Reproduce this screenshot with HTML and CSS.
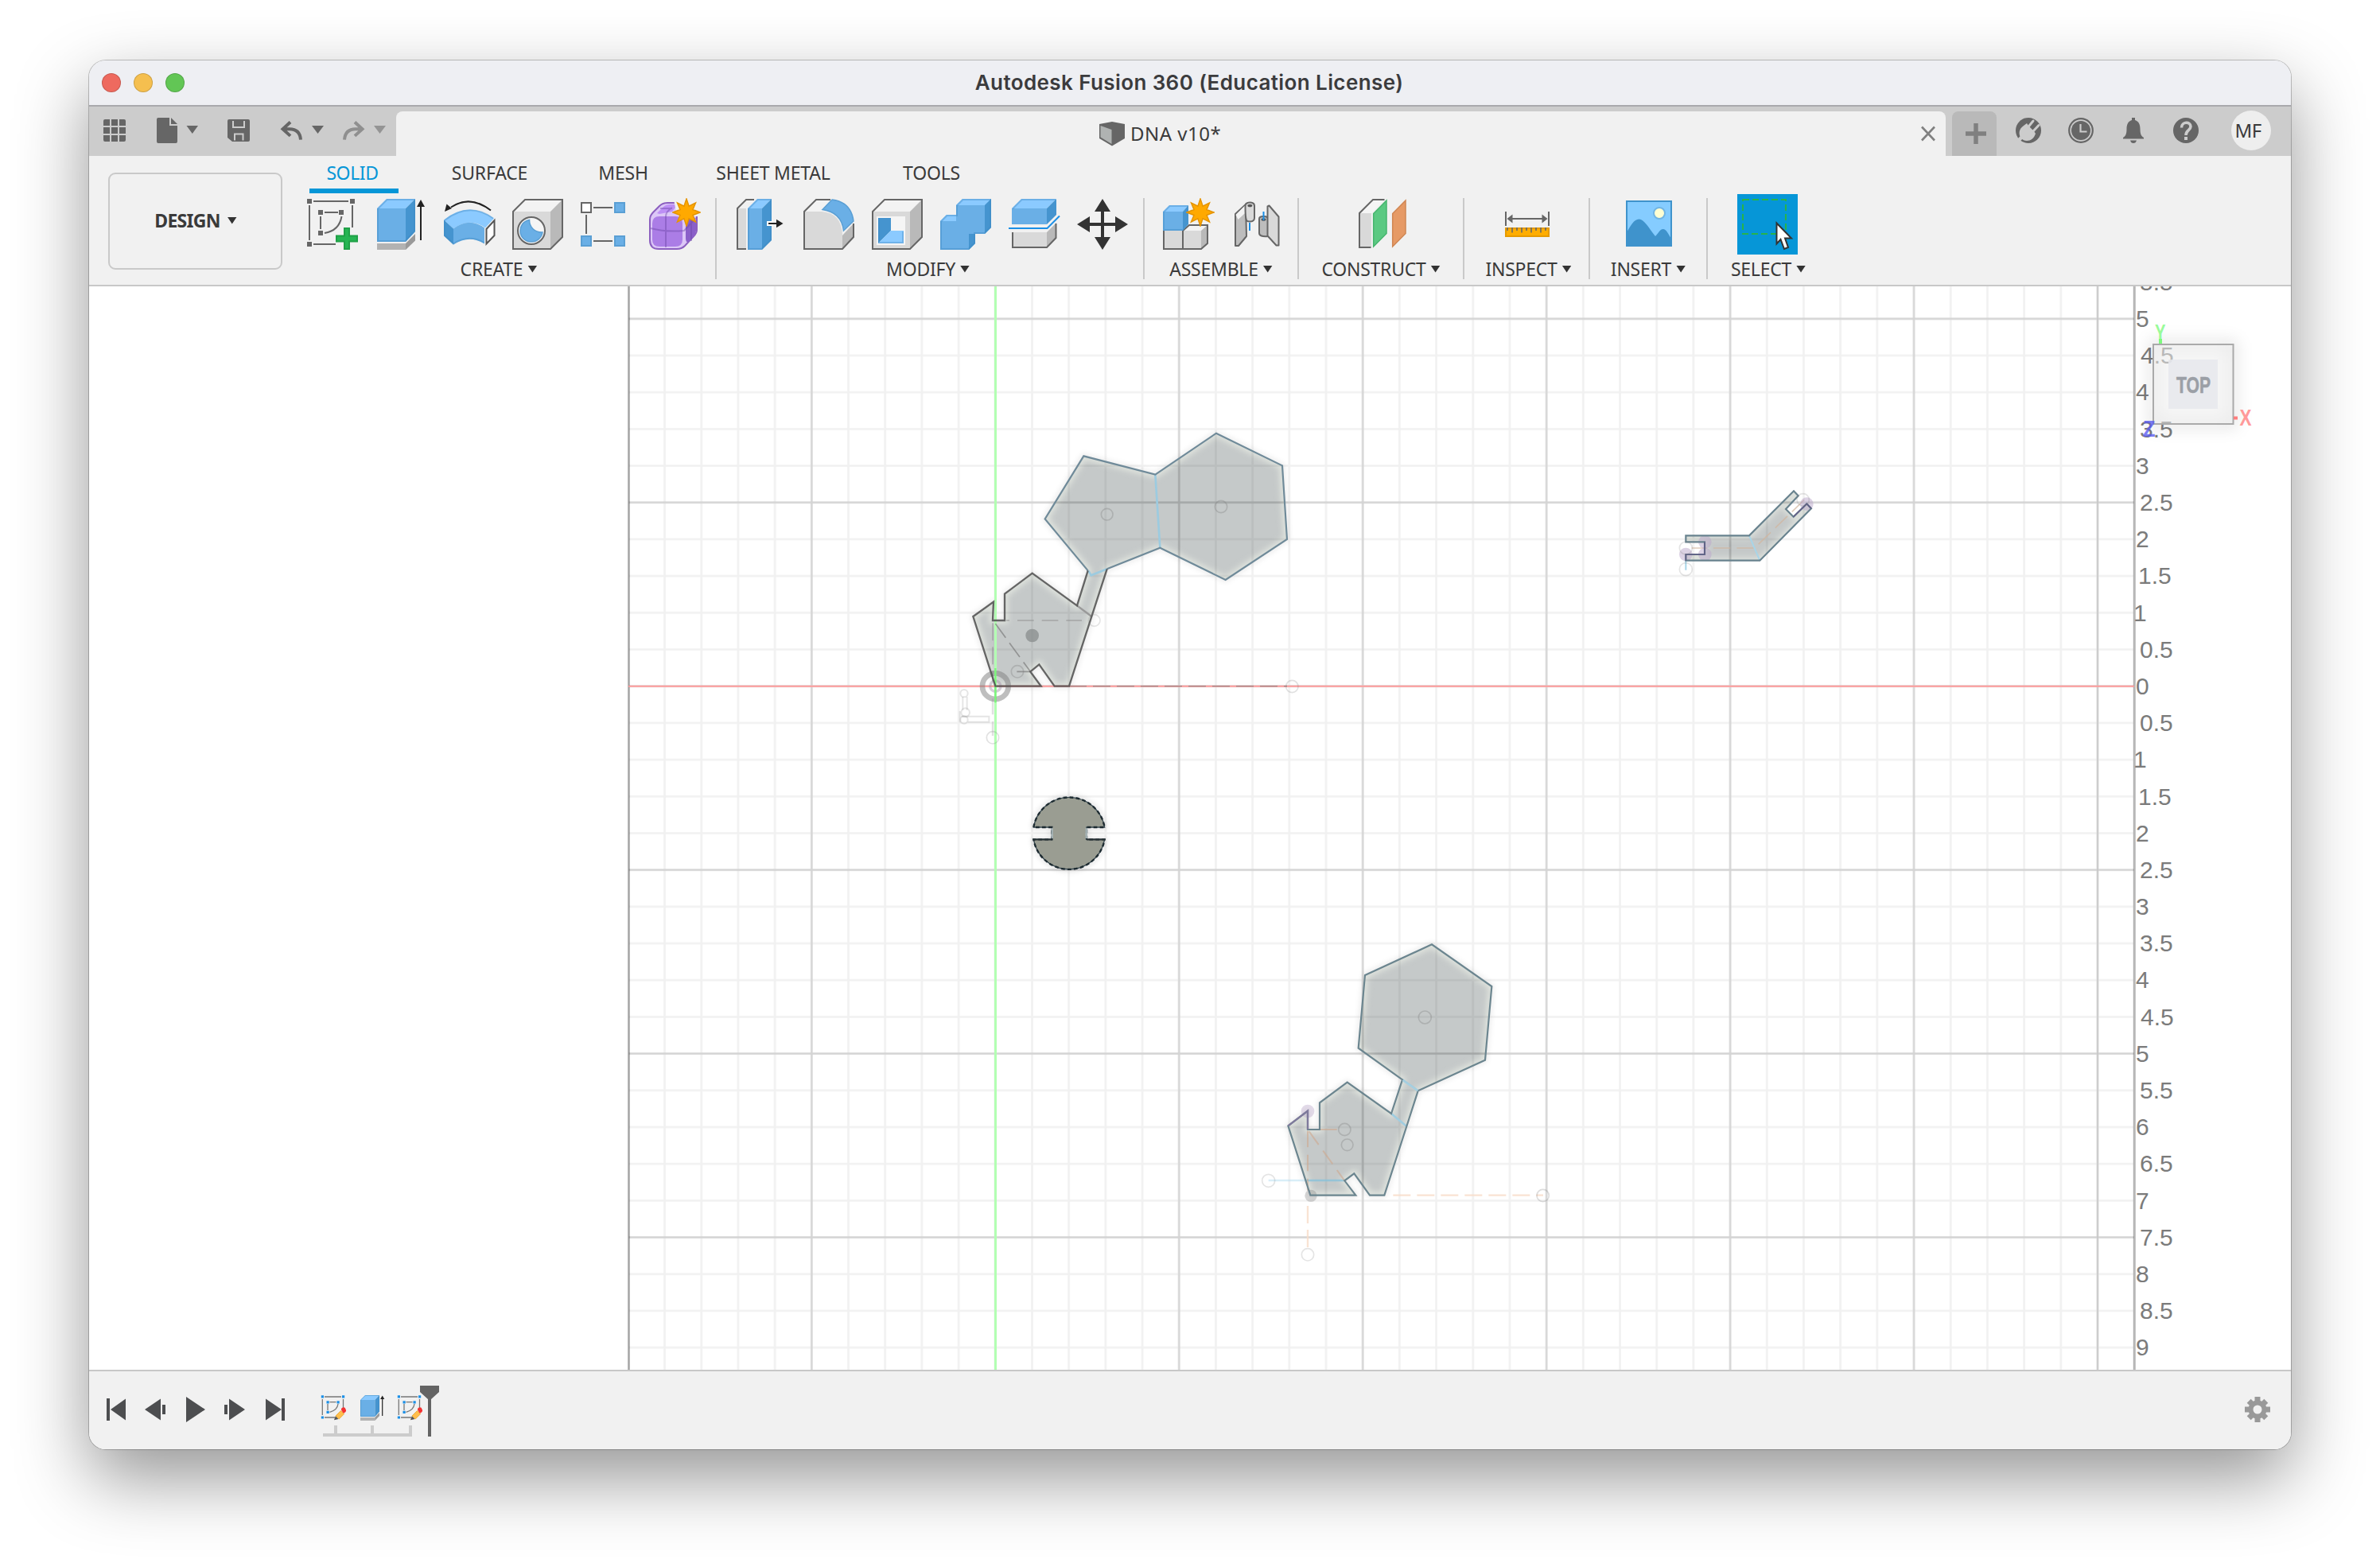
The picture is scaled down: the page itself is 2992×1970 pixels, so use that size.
FILE: index.html
```html
<!DOCTYPE html>
<html lang="en">
<head>
<meta charset="utf-8">
<title>Autodesk Fusion 360 (Education License)</title>
<link rel="stylesheet" href="styles.css">
</head>
<body>
<svg class="defs" width="0" height="0" aria-hidden="true">
  <defs>
    <symbol id="star" viewBox="-18 -18 36 36">
      <path d="M0-17 3.1-7.8 11.5-12 8-3.5 17 0 8 3.5 11.5 12 3.1 7.8 0 17-3.1 7.8-11.5 12-8 3.5-17 0-8-3.5-11.5-12-3.1-7.8Z" fill="#ffa900" stroke="#e59400" stroke-width="1.5"/>
    </symbol>
    <symbol id="history-sketch" viewBox="400 1752 40 36">
      <path d="M408 1756h21M408 1782h13M405.3 1759v20M431.5 1759v11M414.500 1762.700h8M412 1765v8M425 1765q-1 8-10.500 10.300" fill="none" stroke="#777" stroke-width="1.3"/>
      <path d="M403.800 1754.300h3.200v3.200h-3.200zM430 1754.300h3.200v3.200h-3.200zM403.800 1780.400h3.200v3.200h-3.200zM410.500 1761.200h3.200v3.200h-3.200zM423.500 1761.200h3.200v3.200h-3.200zM410.500 1773.800h3.200v3.200h-3.200z" fill="#1b8fe6"/>
      <path d="M420 1785.300l1.800-5 3.800 3.800z" fill="#555"/>
      <path d="M422 1780l6.500-6.500 4.200 4-6.500 6.500z" fill="#ffbe4d" stroke="#e8a32a" stroke-width=".8"/>
      <path d="M429 1772.500a2.800 2.800 0 0 1 5.500-1q1.500 2.500-.8 4.300l-2 1z" fill="#f43232"/>
    </symbol>
  </defs>
</svg>

<main class="window">
  <header class="titlebar">
    <div class="lights"><i class="light close"></i><i class="light minimize"></i><i class="light zoom"></i></div>
    <h1 class="title">Autodesk Fusion 360 (Education License)</h1>
  </header>

  <nav class="docbar">
    <div class="quick">
      <svg width="32" height="36" viewBox="128 146 32 36" fill="#666"><path d="M132 150h6v8h-8v-6a2 2 0 0 1 2-2zM140 150h8v8h-8zM150 150h6a2 2 0 0 1 2 2v6h-8zM130 160h8v8h-8zM140 160h8v8h-8zM150 160h8v8h-8zM130 170h8v8h-6a2 2 0 0 1-2-2zM140 170h8v8h-8zM150 170h8v6a2 2 0 0 1-2 2h-6z"/></svg>
      <svg class="file" width="60" height="36" viewBox="192 146 60 36" fill="#666"><path d="M199 148h14v10h10v20a2 2 0 0 1-2 2h-22a2 2 0 0 1-2-2v-28a2 2 0 0 1 2-2zM215 148l8 8h-8zM234.500 158h14.500l-7.200 10z"/></svg>
      <svg class="save" width="32" height="36" viewBox="284 146 32 36"><path d="M288 150h24a2 2 0 0 1 2 2v24a2 2 0 0 1-2 2h-20l-6-5v-21a2 2 0 0 1 2-2z" fill="#666"/><path d="M293 152v8h14v-8M295 176.500v-8h10.500v8" fill="none" stroke="#ccc" stroke-width="2"/></svg>
      <svg class="undo" width="60" height="36" viewBox="350 146 60 36"><path d="M365 153.500l-9.500 8.700 9.500 8.700M356 162.200h8q13 0 14 13.500" fill="none" stroke="#666" stroke-width="4"/><path d="M392 158h15l-7.500 10z" fill="#666"/></svg>
      <svg class="redo" width="60" height="36" viewBox="428 146 60 36"><path d="M446 153.500l9.500 8.700-9.500 8.700M455 162.200h-8q-13 0-14 13.500" fill="none" stroke="#8f8f8f" stroke-width="4"/><path d="M470 158h15l-7.500 10z" fill="#949494"/></svg>
    </div>
    <div class="doctab">
      <svg width="34" height="34" viewBox="1381 151 34 34"><path d="M1382 156l16-3 16 3v18l-16 9.500-16-9.500z" fill="#666"/><path d="M1383.500 158l14 5v18l-14-8.500z" fill="#b0b3b2"/></svg>
      <span class="docname">DNA v10*</span>
      <svg class="x" width="18" height="20" viewBox="0 0 18 20"><path d="M1 1.500l16 17M17 1.500l-16 17" stroke="#808080" stroke-width="2.600"/></svg>
    </div>
    <div class="newtab"><svg width="26" height="26" viewBox="0 0 26 26"><path d="M13 0v26M0 13h26" stroke="#808080" stroke-width="5.500"/></svg></div>
    <div class="account">
      <svg width="36" height="36" viewBox="2532 146 36 36"><circle cx="2550" cy="164" r="16" fill="#666"/><path d="M2535 179l7-7" stroke="#ccc" stroke-width="4.500"/><path d="M2541 174c-4-5-3-12 3-16l4-3 2 3 7 7 2 3c-2 6-6 9-11 9-3 0-5-1-7-3z" fill="#ccc"/><path d="M2549.500 160l6.500-8M2555.500 165.500l7.500-8" stroke="#ccc" stroke-width="3" stroke-linecap="round"/></svg>
      <svg width="36" height="36" viewBox="2598 146 36 36"><circle cx="2616" cy="164" r="14.800" fill="none" stroke="#666" stroke-width="2.200"/><circle cx="2616" cy="164" r="12" fill="#666"/><path d="M2615.500 156v9.500h8" fill="none" stroke="#ccc" stroke-width="2.200"/></svg>
      <svg width="36" height="36" viewBox="2664 146 36 36" fill="#666"><path d="M2680 148h4v3c5 1.500 6.500 6 6.500 11 0 6 1 9 4.500 11v1.500h-26v-1.500c3.500-2 4.500-5 4.500-11 0-5 1.500-9.500 6.500-11zM2678 176.500h8q-1 3.500-4 3.500t-4-3.500z"/></svg>
      <svg width="36" height="36" viewBox="2730 146 36 36"><circle cx="2748" cy="164" r="16" fill="#666"/><path d="M2742.500 160.500c0-8 11.500-8 11.500-1.500 0 5-6 4.500-6 11" fill="none" stroke="#ccc" stroke-width="3.600"/><path d="M2746 172h4v4h-4z" fill="#ccc"/></svg>
      <span class="avatar">MF</span>
    </div>
  </nav>

  <section class="ribbon">
    <button class="workspace">DESIGN<i class="caret"></i></button>
    <div class="tools">
      <div class="tabs"><span class="tab active">SOLID</span><span class="tab surface">SURFACE</span><span class="tab mesh">MESH</span><span class="tab sheet">SHEET METAL</span><span class="tab utilities">TOOLS</span></div>
      <div class="groups">
        <div class="group create">
          <div class="icons">
            <svg viewBox="382 246 72 76"><path d="M394 253h44M389 258v44M443 258v28M394 307h28M408 267h17M403 272v16M429.500 272q-3 18-21.500 21" fill="none" stroke="#666" stroke-width="2"/><path d="M386 250h6v6h-6zM440 250h6v6h-6zM386 304h6v6h-6zM400 264h6v6h-6zM426 264h6v6h-6zM400 290h6v6h-6z" fill="#666"/><path d="M433 287h6v9.500h10v7h-10v9.500h-6v-9.500h-10v-7h10z" fill="#26b553" stroke="#1fa047" stroke-width="2"/></svg>
            <svg viewBox="468 246 72 76"><path d="M474 306h36v8h-36z" fill="#b2b2b2"/><path d="M510 306l12-12v8.500l-12 11.500z" fill="#999"/><path d="M474 262l12-12h36l-12 12z" fill="#8bcaff"/><path d="M510 262l12-12v41l-12 13z" fill="#4594cf"/><path d="M474 262h36v42h-36z" fill="#6aafe6"/><path d="M475 262.500l11.500-11.500h34.500v40l-11.500 12h-34.500z" fill="none" stroke="#3b87c0" stroke-opacity=".4" stroke-width="2"/><path d="M529 258v44" stroke="#222" stroke-width="2"/><path d="M529 251l5 9h-10z" fill="#222"/></svg>
            <svg viewBox="554 246 72 76"><path d="M617 264.500q-26-20-50-4" fill="none" stroke="#222" stroke-width="2"/><path d="M559 266l2.500-9.500 6.500 5.500z" fill="#222"/><path d="M558 276.500q31-25 63 -2l-11 12q-19-14-40 1z" fill="#8bcaff"/><path d="M558 276.500l12 11v20l-12-11z" fill="#4594cf"/><path d="M570 287.500q20-15 39-1v20q-19-12-39 1z" fill="#6aafe6"/><path d="M559 277q31-24 61-2.500M559 277v19l11 10.500q19-12.500 38.500-1.500" fill="none" stroke="#3b87c0" stroke-opacity=".4" stroke-width="2"/><path d="M611.500 288l10-11v19l-10 10.500z" fill="#fff" stroke="#555" stroke-width="2"/></svg>
            <svg viewBox="640 246 72 76"><path d="M645 266l15-15h47l-15 15z" fill="#f3f3f3"/><path d="M692 266l15-15v47l-15 15z" fill="#b9b9b9"/><path d="M645 266h47v47h-47z" fill="#d9d9d9"/><path d="M645 266l15-15h47v47l-15 15h-47z" fill="none" stroke="#666" stroke-width="2"/><circle cx="668" cy="290" r="17" fill="#f5f5f5" stroke="#666" stroke-width="2"/><path d="M665.500 276.500c-8 1.500-11.500 8-11.500 13.500 0 8 6 14 14 14 7 0 13-5 14-12-10 .500-16.500-6.500-16.500-15.500z" fill="#6aafe6" stroke="#5a9fd4" stroke-width="1.500"/></svg>
            <svg viewBox="726 246 72 76"><path d="M746 261h24M737 270v24M746 303h24" stroke="#666" stroke-width="2"/><path d="M731 255h12v12h-12z" fill="#fff" stroke="#666" stroke-width="2"/><path d="M773 255h12v12h-12zM731 297h12v12h-12zM773 297h12v12h-12z" fill="#6aafe6" stroke="#5a9fd4" stroke-width="2"/></svg>
            <svg viewBox="812 246 72 76"><path d="M817 276q0-5 4-9l8-8q4-4 10-4h30q7 0 7 7v27q0 4-4 8l-11 12q-4 4-10 4h-23q-11 0-11-11z" fill="#dcc7f7" stroke="#8c5fc0" stroke-width="2"/><path d="M826 268l8-8q3-3 8-3h10l-7 9-16 3z" fill="#bd8ff5"/><path d="M820 281q0-9 9-9h20q9 0 9 9v20q0 9-9 9h-20q-9 0-9-9z" fill="#ab7de6"/><path d="M862 284q0-5 4-9 6-5 9 3v12q-1 6-5 10-8 9-8-1z" fill="#8a5fc9"/><path d="M837 311v-39q0-6 8-11M818 287q19 5 42 3l15-16M830 262h15M869 277v26" fill="none" stroke="#6d47a8" stroke-opacity=".45" stroke-width="2"/><path d="M846 246h36v26h-12q-16 6-20-6z" fill="#f1f1f1"/><use href="#star" x="845" y="249" width="36" height="36"/></svg>
          </div>
          <div class="label">CREATE<i class="caret"></i></div>
        </div>
        <span class="divider"></span>
        <div class="group modify">
          <div class="icons">
            <svg viewBox="922 246 72 76"><path d="M927 262h11v51h-11z" fill="#d9d9d9"/><path d="M938 313h-11v-51l11-11h10" fill="none" stroke="#666" stroke-width="2"/><path d="M940 262l12-12h18l-12 12z" fill="#8bcaff"/><path d="M958 262l12-12v52l-12 12z" fill="#4594cf"/><path d="M940 262h18v52h-18z" fill="#6aafe6"/><path d="M941 262.500l11.500-11.500h16.500v50.500l-11.500 11.500h-16.500z" fill="none" stroke="#3b87c0" stroke-opacity=".4" stroke-width="2"/><path d="M964 278h8v6h-8z" fill="#fff"/><path d="M966 281h12" stroke="#222" stroke-width="2"/><path d="M984.500 281l-8.500 5.200v-10.400z" fill="#222"/></svg>
            <svg viewBox="1008 246 72 76"><path d="M1011 266l15-15h18l-11 15z" fill="#f3f3f3"/><path d="M1059 296l14-15v17l-14 15z" fill="#b9b9b9"/><path d="M1011 266h22q25 2 26 29v18h-48z" fill="#d9d9d9"/><path d="M1044 251h-18l-15 15v47h48l14-15v-17" fill="none" stroke="#666" stroke-width="2"/><path d="M1034 263.500l12-12.500q24 3 27 27l-12.500 12q-2.500-23-26.500-26.500z" fill="#6aafe6" stroke="#5a9fd4" stroke-width="1.500"/></svg>
            <svg viewBox="1094 246 72 76"><path d="M1097 266l15-15h47l-15 15z" fill="#f3f3f3"/><path d="M1144 266l15-15v47l-15 15z" fill="#b9b9b9"/><path d="M1097 266h47v47h-47z" fill="#d9d9d9"/><path d="M1097 266l15-15h47v47l-15 15h-47z" fill="none" stroke="#666" stroke-width="2"/><path d="M1102 272h36v36h-36z" fill="#f5f5f5"/><path d="M1104 274h16v16l-16 16z" fill="#4594cf"/><path d="M1104 306l16-16h16v16z" fill="#8bcaff"/><path d="M1105 275v30h30v-14" fill="none" stroke="#3b87c0" stroke-opacity=".35" stroke-width="2"/></svg>
            <svg viewBox="1180 246 72 76"><path d="M1182 278l8-8h12v-12l8-8h36v36l-8 8h-12v12l-8 8h-36z" fill="#6aafe6"/><path d="M1202 258l8-8h36l-8 8zM1182 278l8-8h12v8z" fill="#8bcaff"/><path d="M1238 258l8-8v36l-8 8zM1218 294h8v12l-8 8z" fill="#4594cf"/><path d="M1202 258h36v36h-36z" fill="#6aafe6"/><path d="M1183 278.500l7.500-7.500h12.500v-12.500l7.500-7.500h34.500v34.500l-7.500 7.500h-12.500v12.500l-7.500 7.500h-34.500z" fill="none" stroke="#3b87c0" stroke-opacity=".4" stroke-width="2"/></svg>
            <svg viewBox="1266 246 72 76"><path d="M1272 262l12-12h44l-12 12z" fill="#8bcaff"/><path d="M1316 262l12-12v20l-12 12z" fill="#4594cf"/><path d="M1272 262h44v20h-44z" fill="#6aafe6"/><path d="M1273 262.500l11.500-11.500h42.500" fill="none" stroke="#3b87c0" stroke-opacity=".4" stroke-width="2"/><path d="M1268 287h48.500l15.500-15.500" fill="none" stroke="#1b8fe6" stroke-width="2"/><path d="M1273 292h43v19h-43z" fill="#d9d9d9"/><path d="M1316 292l12-12v19l-12 12z" fill="#b9b9b9"/><path d="M1273 292v19h43l11.500-12v-18" fill="none" stroke="#666" stroke-width="2"/></svg>
            <svg viewBox="1352 246 72 76"><path d="M1386 262v40M1366 282h40" stroke="#333" stroke-width="4"/><path d="M1386 250l10 16h-20zM1386 314l10-16h-20zM1354 282l16-10v20zM1418 282l-16-10v20z" fill="#333"/></svg>
          </div>
          <div class="label">MODIFY<i class="caret"></i></div>
        </div>
        <span class="divider"></span>
        <div class="group assemble">
          <div class="icons">
            <svg viewBox="1460 246 72 76"><path d="M1463 290h24v23h-24zM1487 290h23v23h-23z" fill="#d9d9d9"/><path d="M1487 290l8-7h23l-8 7z" fill="#f3f3f3"/><path d="M1510 290l8-7v23l-8 7z" fill="#b9b9b9"/><path d="M1463 290v23h47l8-7v-23h-23l-8 7v23" fill="none" stroke="#666" stroke-width="2"/><path d="M1462 266l8-8h24l-7 8z" fill="#8bcaff"/><path d="M1487 266l7-8v24l-7 8z" fill="#4594cf"/><path d="M1462 266h25v24h-25z" fill="#6aafe6"/><path d="M1463 266.500l7.500-7.500h23M1463 266v23h24" fill="none" stroke="#3b87c0" stroke-opacity=".4" stroke-width="2"/><circle cx="1509" cy="267" r="14" fill="#f1f1f1"/><use href="#star" x="1491" y="249" width="36" height="36"/></svg>
            <svg viewBox="1546 246 72 76" stroke-linejoin="round"><path d="M1553 269l13-12 1 40-10 12h-4z" fill="#bdbdbd" stroke="#666" stroke-width="2"/><path d="M1553.500 270l12-12 5 5-14 13z" fill="#f3f3f3"/><path d="M1565.500 259q0-4.500 6-4.500 5.500 0 5.500 4.500v15q0 4-5 4.500-4 .500-5-1.500-1.500-3-1.500-18z" fill="#d9d9d9" stroke="#666" stroke-width="2"/><ellipse cx="1571.300" cy="258.500" rx="3" ry="1.800" fill="#555"/><path d="M1571 280v10" stroke="#1b8fe6" stroke-width="2"/><path d="M1583 275q0-3 5.500-3t5.500 3v22q-11 1-11-4z" fill="#bdbdbd" stroke="#666" stroke-width="2"/><path d="M1593.500 259.500l2-1 12 14v36h-3l-11-12z" fill="#d9d9d9" stroke="#666" stroke-width="2"/><ellipse cx="1588.500" cy="276" rx="3" ry="1.800" fill="#555"/><path d="M1588.500 266v11" stroke="#1b8fe6" stroke-width="2"/></svg>
          </div>
          <div class="label">ASSEMBLE<i class="caret"></i></div>
        </div>
        <span class="divider"></span>
        <div class="group construct">
          <div class="icons">
            <svg viewBox="1702 246 72 76"><path d="M1709 268h15v43h-15z" fill="#d9d9d9"/><path d="M1709 268l17-17h14l-16 17z" fill="#f5f5f5"/><path d="M1723.500 311h-14.500v-43l17-17h14.500" fill="none" stroke="#666" stroke-width="2"/><path d="M1726.700 268.500l16.300-16.500v41.500l-16.300 16.500z" fill="#5bc982" stroke="#46b56e" stroke-width="1.500"/><path d="M1750.700 268.500l16.300-16.500v41.500l-16.300 16.500z" fill="#e69a66" stroke="#d08653" stroke-width="1.500"/></svg>
          </div>
          <div class="label">CONSTRUCT<i class="caret"></i></div>
        </div>
        <span class="divider"></span>
        <div class="group inspect">
          <div class="icons">
            <svg viewBox="1884 246 72 76"><path d="M1893 266v18M1947 266v18M1898 275h44" stroke="#666" stroke-width="2"/><path d="M1894.500 275l7-5.500v11zM1945.500 275l-7-5.500v11z" fill="#666"/><path d="M1893 287h54v10h-54z" fill="#ffad00" stroke="#e59a00" stroke-width="2"/><path d="M1895 286v4M1901 286v6.500M1907 286v4M1913 286v6.500M1919 286v4M1925 286v6.500M1931 286v4M1937 286v6.500M1943 286v4" stroke="#666" stroke-width="1.600"/></svg>
          </div>
          <div class="label">INSPECT<i class="caret"></i></div>
        </div>
        <span class="divider"></span>
        <div class="group insert">
          <div class="icons">
            <svg viewBox="2037 246 72 76"><path d="M2045 253h56v56h-56z" fill="#85ccff" stroke="#3f93cc" stroke-width="2"/><circle cx="2086" cy="268" r="7" fill="#ffffd2" stroke="#71b5e4" stroke-width="2"/><path d="M2045 292c5-8 9-16.500 15.500-16.500S2073 287 2081 297c4-4 6-9 9.700-9 4 0 6 5 10.300 12v9h-56z" fill="#3f93cc"/></svg>
          </div>
          <div class="label">INSERT<i class="caret"></i></div>
        </div>
        <span class="divider"></span>
        <div class="group select">
          <div class="icons">
            <svg class="picked" viewBox="2184 244 76 76"><path d="M2191 251h54v43h-54z" fill="none" stroke="#27b34a" stroke-width="2" stroke-dasharray="8 4"/><path d="M2233.500 280.500v26l5-5.500 4.500 12 5-2-4-11.500h8z" fill="#fff" stroke="#333" stroke-width="2"/></svg>
          </div>
          <div class="label">SELECT<i class="caret"></i></div>
        </div>
      </div>
    </div>
  </section>

  <section class="viewport">
    <svg class="scene" viewBox="112 360 2768 1362" width="2768" height="1362">
      <defs>
        <pattern id="minor" patternUnits="userSpaceOnUse" x="1228.200" y="839.600" width="46.190" height="46.190">
          <path d="M23.100 0v46.190M0 23.100h46.190" stroke="#000" stroke-opacity=".055" stroke-width="2.600"/>
        </pattern>
        <pattern id="major" patternUnits="userSpaceOnUse" x="1135.800" y="747.200" width="230.950" height="230.950">
          <path d="M115.500 0v230.950M0 115.500h230.950" stroke="#000" stroke-opacity=".12" stroke-width="2.400"/>
        </pattern>
        <filter id="soft" x="-20%" y="-20%" width="140%" height="140%"><feGaussianBlur stdDeviation="11"/></filter>
        <path id="purine" d="M184 1028 100 765 177 710 174 780H219V680L323 602 492 724 533 592 371 397 517 160 787 230 1017 74 1266 196 1284 474 1052 627 805 506 605 586 547 765 462 1028H407L349 946 316 973 356 1028Z"/>
        <path id="pyrimidine" d="M262 1028 178 766 252 710V780H297V679L401 602 567 720 609 592 443 473 468 198 720 82 946 240 921 518 668 634 625 768 541 1028H486L427 946 391 973 433 1028Z"/>
        <path id="link" d="M118 250H357L525 82 542 100 495 150 524 179 574 130 591 148 397 344H118V321H189V274H118Z"/>
        <path id="disc" d="M118 210A136 136 0 0 1 386 210H318V256H386A136 136 0 0 1 118 256H187V210Z"/>
        <clipPath id="clip-a"><use href="#purine"/></clipPath>
        <clipPath id="clip-b"><use href="#pyrimidine"/></clipPath>
        <clipPath id="clip-c"><use href="#link"/></clipPath>
      </defs>

      <!-- body fills, under the grid -->
      <g transform="translate(1190 520) scale(.33333)">
        <use href="#purine" fill="none" stroke="#000" stroke-opacity=".18" stroke-width="8" filter="url(#soft)"/>
        <use href="#purine" fill="#c5c9c9"/>
        <g clip-path="url(#clip-a)"><use href="#purine" fill="none" stroke="#e0e4de" stroke-width="26" filter="url(#soft)"/></g>
      </g>
      <g transform="translate(1560 1160) scale(.33333)">
        <use href="#pyrimidine" fill="none" stroke="#000" stroke-opacity=".18" stroke-width="8" filter="url(#soft)"/>
        <use href="#pyrimidine" fill="#c5c9c9"/>
        <g clip-path="url(#clip-b)"><use href="#pyrimidine" fill="none" stroke="#e0e4de" stroke-width="26" filter="url(#soft)"/></g>
      </g>
      <g transform="translate(2080 590) scale(.33333)">
        <use href="#link" fill="#c5c9c9"/>
        <g clip-path="url(#clip-c)"><use href="#link" fill="none" stroke="#e0e4de" stroke-width="20" filter="url(#soft)"/></g>
      </g>

      <!-- grid and axes -->
      <rect x="790" y="360" width="1893" height="1362" fill="url(#minor)"/>
      <rect x="790" y="360" width="1893" height="1362" fill="url(#major)"/>
      <path d="M790.500 360v1362M2683.300 360v1362" stroke="#000" stroke-opacity=".27" stroke-width="3"/>
      <path d="M2637 360v1362" stroke="#000" stroke-opacity=".05" stroke-width="2"/>
      <path d="M790 862.700h1893" stroke="#ff9c9c" stroke-width="2"/>
      <path d="M1251.500 360v1362" stroke="#b3ffb3" stroke-width="3"/>

      <!-- outlines and sketch geometry -->
      <g transform="translate(1190 520) scale(.33333)" fill="none">
        <circle cx="184" cy="1028" r="49" stroke="#7d7d7d" stroke-opacity=".5" stroke-width="20"/>
        <circle cx="184" cy="1028" r="20" stroke="#9b8aa0" stroke-opacity=".4" stroke-width="10"/>
        <path d="M184 960V1090" stroke="#7df57d" stroke-width="7"/>
        <path d="M225 780H510" stroke="#888" stroke-opacity=".55" stroke-width="5" stroke-dasharray="62 30" stroke-dashoffset="50"/>
        <path d="M184 792 316 973M265 973H316" stroke="#777" stroke-opacity=".65" stroke-width="5" stroke-dasharray="66 24"/>
        <path d="M174 790V1010" stroke="#777" stroke-opacity=".35" stroke-width="6" stroke-dasharray="66 24"/>
        <path d="M174 1075V1215" stroke="#888" stroke-opacity=".25" stroke-width="7" stroke-dasharray="60 26"/>
        <path d="M492 724 547 765" stroke="#999" stroke-width="7"/>
        <path d="M462 1028H1284" stroke="#777" stroke-opacity=".65" stroke-width="4" stroke-dasharray="66 24"/>
        <path d="M787 230 805 506M535 592 545 610 605 586" stroke="#9ccbe0" stroke-width="8"/>
        <path d="M533 592 371 397 517 160 787 230 1017 74 1266 196 1284 474 1052 627 805 506 605 586" stroke="#6f8a99" stroke-width="6.500"/>
        <path d="M533 592 492 724 323 602 219 680V780H174L177 710 100 765 184 1028H356L316 973 349 946 407 1028H462L605 586" stroke="#4d4d4d" stroke-opacity=".85" stroke-width="7"/>
        <g stroke="#777" stroke-opacity=".3" stroke-width="5"><circle cx="605" cy="380" r="22"/><circle cx="1035" cy="351" r="23"/><circle cx="557" cy="780" r="22" stroke-opacity=".2"/><circle cx="267" cy="973" r="23"/><circle cx="1303" cy="1029" r="23" stroke-opacity=".22"/><circle cx="174" cy="1222" r="23" stroke-opacity=".22"/></g>
        <circle cx="323" cy="837" r="25" fill="#858989" fill-opacity=".7"/>
        <g stroke="#888" stroke-opacity=".22" stroke-width="6"><circle cx="66" cy="1055" r="14"/><path d="M61 1068V1118M77 1068V1118"/><circle cx="71" cy="1127" r="16"/><circle cx="66" cy="1155" r="14"/><path d="M55 1142H160V1163H80M50 1122V1165"/></g>
      </g>
      <g transform="translate(1560 1160) scale(.33333)" fill="none">
        <circle cx="252" cy="711" r="25" fill="#b9a5c9" fill-opacity=".4"/>
        <circle cx="264" cy="1030" r="23" fill="#777" fill-opacity=".3"/>
        <path d="M104 972H391" stroke="#9fd5ee" stroke-opacity=".4" stroke-width="8"/><path d="M245 972H391" stroke="#87bfd6" stroke-opacity=".7" stroke-width="7"/>
        <path d="M574 1028H1140M252 1068V1232" stroke="#f8dcc8" stroke-opacity=".8" stroke-width="7" stroke-dasharray="66 24"/>
        <path d="M252 785V1010M257 787 391 973M300 780H390" stroke="#cfa98e" stroke-opacity=".6" stroke-width="6" stroke-dasharray="62 28"/>
        <path d="M609 592 668 634M567 720 625 768" stroke="#a0cde0" stroke-width="8"/>
        <use href="#pyrimidine" stroke="#6b858f" stroke-width="6.500"/>
        <path d="M609 595 668 634" stroke="#a9d0e0" stroke-width="4"/>
        <path d="M178 766 252 710V780" stroke="#7f7a9c" stroke-width="7"/>
        <g stroke="#777" stroke-opacity=".3" stroke-width="5"><circle cx="694" cy="357" r="24"/><circle cx="391" cy="780" r="23"/><circle cx="401" cy="838" r="22"/><circle cx="104" cy="973" r="24" stroke-opacity=".2"/><circle cx="1139" cy="1029" r="23" stroke-opacity=".25"/><circle cx="252" cy="1252" r="23" stroke-opacity=".2"/></g>
      </g>
      <g transform="translate(2080 590) scale(.33333)" fill="none">
        <path d="M140 297H377L570 110" stroke="#d1b59d" stroke-opacity=".7" stroke-width="5" stroke-dasharray="64 24" stroke-dashoffset="6"/>
        <path d="M357 250 397 344M118 345V380" stroke="#a8d5e8" stroke-width="6"/>
        <g fill="#b9a5c9" fill-opacity=".5"><circle cx="118" cy="321" r="25"/><circle cx="190" cy="274" r="25"/><circle cx="190" cy="321" r="25"/><circle cx="574" cy="131" r="25"/></g>
        <use href="#link" stroke="#68828e" stroke-width="6.500"/>
        <path d="M118 344V321H189V274M524 179 574 130 591 148" stroke="#5f5483" stroke-opacity=".8" stroke-width="5"/>
        <g stroke="#777" stroke-opacity=".2" stroke-width="5"><circle cx="118" cy="297" r="24"/><circle cx="118" cy="377" r="24"/><circle cx="560" cy="115" r="23"/></g>
      </g>
      <g transform="translate(1260 970) scale(.33333)">
        <use href="#disc" fill="none" stroke="#000" stroke-opacity=".2" stroke-width="10" filter="url(#soft)"/>
        <use href="#disc" fill="#9a9d92" stroke="#33444c" stroke-width="4"/>
        <use href="#disc" fill="none" stroke="#1c2a30" stroke-width="7" stroke-dasharray="14 10"/>
        <path d="M116 256H187M318 256H388" stroke="#2a3438" stroke-width="7"/><path d="M188 214V252M317 214V252" stroke="#a9b7b9" stroke-width="7"/>
      </g>

      <!-- ruler -->
      <g class="ruler">
        <text x="2690" y="364.500">5.5</text><text x="2685" y="411">5</text><text x="2691" y="457.200">4.5</text><text x="2685" y="503.400">4</text><text x="2690" y="549.500">3.5</text><text x="2685" y="595.700">3</text><text x="2690" y="642">2.5</text><text x="2685" y="688">2</text><text x="2688" y="734.300">1.5</text><text x="2682" y="780.500">1</text><text x="2690" y="826.700">0.5</text><text x="2685" y="873">0</text>
        <text x="2690" y="919">0.5</text><text x="2682" y="965.300">1</text><text x="2688" y="1011.500">1.5</text><text x="2685" y="1057.700">2</text><text x="2690" y="1104">2.5</text><text x="2685" y="1150">3</text><text x="2690" y="1196.200">3.5</text><text x="2685" y="1242.400">4</text><text x="2691" y="1288.600">4.5</text><text x="2685" y="1334.800">5</text><text x="2690" y="1381">5.5</text><text x="2685" y="1427.200">6</text><text x="2690" y="1473.400">6.5</text><text x="2685" y="1519.600">7</text><text x="2690" y="1565.800">7.5</text><text x="2685" y="1612">8</text><text x="2690" y="1658">8.5</text><text x="2685" y="1704.300">9</text>
      </g>

      <!-- view cube -->
      <g class="viewcube">
        <rect class="cube-shadow" x="2707" y="433" width="100" height="100"/>
        <rect x="2707" y="433" width="100.500" height="100" fill="#eeeeee" fill-opacity=".55" stroke="#aaa" stroke-width="2"/>
        <rect x="2726" y="452" width="62" height="62" fill="#e6e8ec" fill-opacity=".85"/>
        <text class="face" x="2736" y="494" textLength="43" lengthAdjust="spacingAndGlyphs">TOP</text>
        <text x="2709" y="428" fill="#99fb99" textLength="13.500" lengthAdjust="spacingAndGlyphs">Y</text><path d="M2716 426v6" stroke="#7dfb7d" stroke-width="4"/>
        <text x="2815.500" y="535" fill="#ff9999" textLength="15" lengthAdjust="spacingAndGlyphs">X</text><path d="M2808 525.500h5" stroke="#ff7d7d" stroke-width="4"/>
        <text x="2694" y="549" fill="#5a5af0" fill-opacity=".8" textLength="15.500" lengthAdjust="spacingAndGlyphs">Z</text>
      </g>
    </svg>
  </section>

  <footer class="timeline">
    <svg width="240" height="40" viewBox="128 1752 240 40" fill="#4d4e50"><path d="M134 1758h4v28h-4zM158 1758.500v27l-19-13.500zM202 1758.500v27l-20-13.500zM204 1766h4v12h-4zM234 1756l24 16-24 16zM282 1766h4v12h-4zM288 1758.500l20 13.500-20 13.500zM334 1758.500l20 13.500-20 13.500zM354 1758h4v28h-4z"/></svg>
    <svg class="history" width="160" height="70" viewBox="400 1738 160 70">
      <use href="#history-sketch" x="400" y="1752" width="40" height="36"/>
      <g><path d="M453 1782h18.300v4h-18.300z" fill="#b2b2b2"/><path d="M471.300 1782l5.700-6v4l-5.700 6z" fill="#999"/><path d="M453 1760l6-6h18l-5.700 6z" fill="#8bcaff"/><path d="M471.300 1760l5.700-6v20.500l-5.700 6.500z" fill="#4594cf"/><path d="M453 1760h18.300v21h-18.300z" fill="#6aafe6"/><path d="M453.500 1760l5.700-5.500h17.300v20l-5.500 6h-17.500z" fill="none" stroke="#3b87c0" stroke-opacity=".5"/><path d="M480.700 1757v23" stroke="#222" stroke-width="1.200"/><path d="M480.700 1754.500l2.600 4.500h-5.200z" fill="#222"/></g>
      <use href="#history-sketch" x="496" y="1752" width="40" height="36"/>
      <path d="M406 1802h14v-10h4v10h42v-10h4v10h44v-10h4v14h-112z" fill="#ccc"/>
      <path d="M528 1742h24v8l-10 9v47h-4v-47l-10-9z" fill="#646464"/>
    </svg>
    <svg class="gear" width="32" height="32" viewBox="-16 -16 32 32" fill="none" stroke="#999"><path d="M0-16V-8M0 16V8M-16 0H-8M16 0H8M-10.800-10.800-7-7M10.800 10.800 7 7M-10.800 10.800-7 7M10.800-10.800 7-7" stroke-width="7"/><circle r="8.500" stroke-width="6"/></svg>
  </footer>
</main>
</body>
</html>
```
FILE: styles.css
```css
* { box-sizing: border-box; }
html { height: 100%; overflow: hidden; }
body { display: flex; min-height: 100vh; margin: 0; background: #fff; font-family: "Noto Sans", sans-serif; color: #3a3a3a; }
svg { display: block; flex: none; }
.defs { position: absolute; }

.window {
  display: flex; flex-direction: column;
  width: 2768px; height: 1746px; margin: 76px 112px 0;
  border-radius: 21px; overflow: hidden; background: #fff;
  box-shadow: 0 0 0 1px rgba(0,0,0,.22), 0 36px 90px rgba(0,0,0,.42);
}

.titlebar {
  display: grid; grid-template-columns: 1fr auto 1fr; align-items: center;
  height: 58px; background: #eeeff3; border-bottom: 2px solid #a9a9ad;
}
.lights { display: flex; gap: 16px; padding-left: 16px; }
.light { width: 24px; height: 24px; border-radius: 50%; border: 1px solid rgba(0,0,0,.16); }
.close { background: #ee6a5f; }
.minimize { background: #f5bf4f; }
.zoom { background: #62c655; }
.title { margin: 0 2px 0 0; font: 600 26px/32px Inter, sans-serif; letter-spacing: .4px; color: #3b3b3d; white-space: nowrap; }

.docbar { display: flex; height: 62px; background: #ccc; }
.quick { display: flex; width: 386px; padding: 12px 0 0 16px; }
.file, .save { margin-left: 32px; }
.undo { margin-left: 34px; }
.redo { margin-left: 18px; }
.doctab {
  display: grid; grid-template-columns: 34px auto 18px; align-items: center;
  width: 1948px; height: 56px; margin-top: 6px; padding: 0 13px 0 883px;
  background: #f1f1f1; border-radius: 8px 8px 0 0;
}
.docname { font-size: 24px; line-height: 30px; padding-left: 6px; letter-spacing: .5px; }
.newtab {
  display: flex; align-items: center; justify-content: center;
  width: 56px; height: 56px; margin: 6px 0 0 8px; background: #b9b9b9; border-radius: 8px 8px 0 0;
}
.newtab svg { margin-left: 3px; }
.account { display: flex; gap: 30px; padding: 12px 0 0 22px; }
.avatar {
  width: 50px; height: 50px; margin: -7px 0 0 9px; padding-right: 8px; border-radius: 50%;
  background: #eee; font-size: 24px; line-height: 49px; text-align: center; letter-spacing: -.5px;
}

.ribbon { display: flex; height: 164px; background: #f1f1f1; border-bottom: 2px solid #c8c8c8; }
.workspace {
  display: flex; align-items: center; justify-content: center; gap: 9px;
  width: 219px; height: 122px; margin: 21px 0 0 24px; padding: 0 0 2px 1px;
  border: 2px solid #c9c9c9; border-radius: 9px; background: none;
  font: 700 23px/30px "Noto Sans", sans-serif; color: #3a3a3a; letter-spacing: -.7px;
}
.caret { width: 12px; height: 9px; background: #333; clip-path: polygon(0 0, 100% 0, 50% 100%); }
.tools { display: flex; flex-direction: column; }
.tabs { display: flex; height: 48px; padding-left: 34px; }
.tab { height: 47px; padding-top: 6px; font-size: 23px; line-height: 30px; letter-spacing: -.2px; text-align: center; white-space: nowrap; }
.active { width: 112px; padding-right: 4px; color: #0696d7; border-bottom: 6px solid #0696d7; letter-spacing: -.4px; }
.surface { width: 229px; }
.mesh { width: 107px; }
.sheet { width: 270px; }
.utilities { width: 128px; }
.groups { display: flex; }
.divider { width: 2px; height: 102px; margin-top: 5px; background: #c9c9c9; }
.group { padding-top: 2px; }
.icons { display: flex; gap: 14px; height: 77px; }
.icons svg { width: 72px; height: 76px; }
.icons .picked { width: 76px; margin-top: -2px; background: #0696d7; }
.label { display: flex; align-items: center; justify-content: center; gap: 6px; font-size: 23px; line-height: 30px; letter-spacing: -.25px; }
.create { width: 544px; }
.create .icons { padding-left: 27px; }
.modify { width: 536px; }
.modify .icons { padding-left: 21px; }
.modify .label { padding-right: 5px; }
.assemble { width: 192px; }
.assemble .icons { padding-left: 21px; }
.construct { width: 206px; }
.construct .icons { padding-left: 69px; }
.inspect { width: 156px; }
.inspect .icons { padding-left: 43px; }
.inspect .label { padding-left: 5px; }
.insert { width: 146px; }
.insert .icons { padding-left: 38px; }
.select { width: 152px; }
.select .icons { padding-left: 37px; }

.viewport { height: 1362px; background: #fff; overflow: hidden; }
.ruler text { font: 30px "Liberation Sans", sans-serif; fill: #7b7b7b; }
.viewcube text { font: 700 29px "Liberation Sans", sans-serif; }
.viewcube .face { fill: #9b9fa6; stroke: #9b9fa6; stroke-width: .6px; }
.cube-shadow { fill: none; stroke: #000; stroke-opacity: .3; stroke-width: 4px; filter: blur(10px); }

.timeline { display: flex; align-items: flex-start; height: 100px; padding: 28px 26px 0 16px; background: #f1f1f1; border-top: 2px solid #c8c8c8; }
.history { margin: -14px 0 0 32px; }
.gear { margin: 4px 0 0 auto; }
```
